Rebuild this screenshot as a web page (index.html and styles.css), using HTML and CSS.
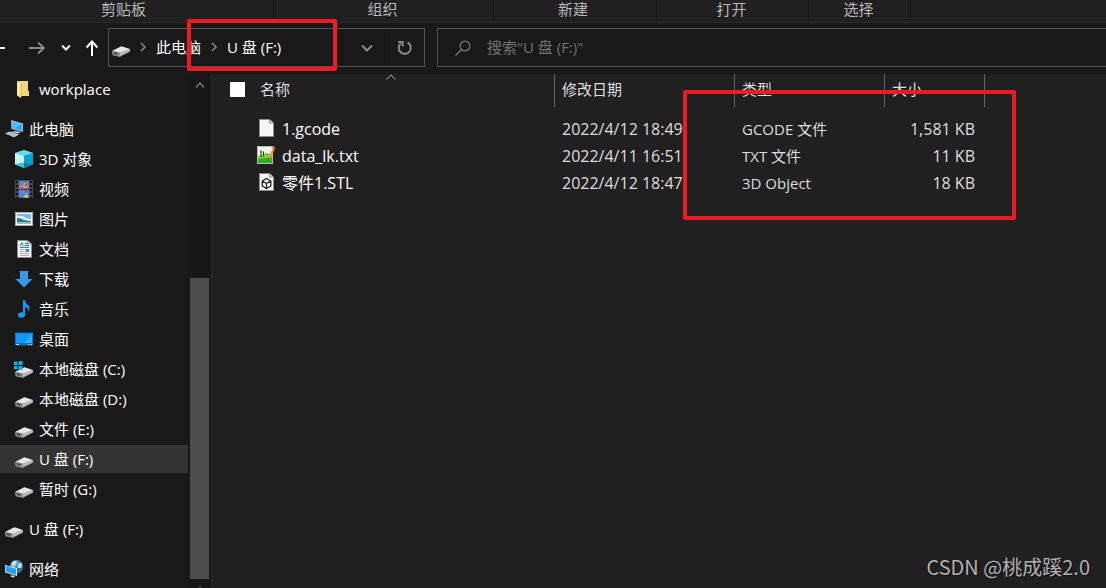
FILE: index.html
```
<!DOCTYPE html>
<html lang="zh-CN">
<head>
    <meta charset="UTF-8">
    <meta name="viewport" content="width=device-width, initial-scale=1.0">
    <title>U 盘 (F:)</title>
    <link rel="stylesheet" href="styles.css">
</head>
<body>

    <!-- shared icons -->
    <svg class="sprite">
        <symbol id="drive" viewBox="0 -1 18 18" overflow="visible">
            <path d="M0 11 L9 6.500 L18 9 L18 11.500 L8 17 L1 15.500 L0 14Z" fill="#77777a"/>
            <path d="M0.500 10.800 L9.500 6.300 L17.800 9 L8 12.800Z" fill="#e6e6e8"/>
            <path d="M8 12.800 L17.800 9 L17.800 11.500 L8 16Z" fill="#bdbdc1"/>
            <path d="M0.500 11 L8 12.800 L8 16.400 L1.500 15Z" fill="#9a9a9d"/>
            <path d="M1.500 12 L7 13.300 L7 15.200 L2 14.200Z" fill="#454547"/>
            <rect x="5" y="13.500" width="2" height="1.500" fill="#42b94a"/>
        </symbol>
        <symbol id="page" viewBox="0 0 18 18">
            <path d="M2.500 0.500 H12.500 L16.500 4 V17.500 H2.500Z" fill="#f5f6f6" stroke="#8d8d8d"/>
            <path d="M12.500 0.500 V4 H16.500" fill="#d5d5d5" stroke="#8d8d8d"/>
        </symbol>
    </svg>

    <div class="ribbon">
        <span class="group clipboard">剪贴板</span>
        <span class="group organize">组织</span>
        <span class="group new">新建</span>
        <span class="group open">打开</span>
        <span class="group select">选择</span>
    </div>

    <div class="toolbar">
        <button class="tool back" aria-label="后退"><svg width="20" height="16" viewBox="0 0 20 16"><path d="M0 8 H5" stroke="#fff" stroke-width="2"/></svg></button>
        <button class="tool forward" aria-label="前进"><svg width="16" height="14" viewBox="0 0 16 14"><path d="M0 7 H15 M9 1.500 L15 7 L9 12.500" fill="none" stroke="#8c8c8c" stroke-width="1.800"/></svg></button>
        <button class="tool recent" aria-label="最近浏览的位置"><svg width="10" height="8" viewBox="0 0 10 8"><path d="M1 1.500 L5 5.500 L9 1.500" fill="none" stroke="#f5f5f5" stroke-width="2"/></svg></button>
        <button class="tool up" aria-label="上移"><svg width="14" height="16" viewBox="0 0 14 16"><path d="M7 16 V2 M1.500 7.500 L7 1.500 L12.500 7.500" fill="none" stroke="#fff" stroke-width="2"/></svg></button>

        <div class="address">
            <svg class="address-icon" width="18" height="18"><use href="#drive"/></svg>
            <svg class="crumb-arrow" width="6" height="10" viewBox="0 0 6 10"><path d="M1 1 L5 5 L1 9" fill="none" stroke="#8a8a8a" stroke-width="1.500"/></svg>
            <button class="crumb">此电脑</button>
            <svg class="crumb-arrow" width="6" height="10" viewBox="0 0 6 10"><path d="M1 1 L5 5 L1 9" fill="none" stroke="#8a8a8a" stroke-width="1.500"/></svg>
            <button class="crumb">U 盘 (F:)</button>
            <button class="tool history" aria-label="以前的位置"><svg width="12" height="8" viewBox="0 0 12 8"><path d="M1 1.500 L6 6.500 L11 1.500" fill="none" stroke="#8a8a8a" stroke-width="2"/></svg></button>
            <button class="tool refresh" aria-label="刷新"><svg width="16" height="16" viewBox="0 0 16 16"><path d="M10.500 2.500 A6 6 0 1 1 4 3.200" fill="none" stroke="#8a8a8a" stroke-width="2"/><path d="M1 1.800 H5.800 V6.500" fill="none" stroke="#8a8a8a" stroke-width="1.800"/></svg></button>
        </div>

        <div class="search">
            <svg width="16" height="16" viewBox="0 0 16 16"><circle cx="10" cy="6" r="4.900" fill="none" stroke="#7a7a7a" stroke-width="1.200"/><path d="M6.500 9.500 L0.500 15.500" stroke="#7a7a7a" stroke-width="1.300"/></svg>
            <input type="text" aria-label="搜索" placeholder='搜索"U 盘 (F:)"'>
        </div>
    </div>

    <div class="content">
        <nav class="sidebar">
            <a class="item child" href="#"><svg viewBox="0 0 18 18"><path d="M3 1 H13 V11 H14 V16 H6 L3 15Z" fill="#f8d675"/><path d="M2 1 L6 3.500 V18 L2 15.500Z" fill="#ffe9a4"/><path d="M6 4 V17" stroke="#d9b04e"/></svg>workplace</a>
            <a class="item root" href="#"><svg viewBox="0 0 18 18"><path d="M6 0 L18 3.500 V12 L6.500 9Z" fill="#b7c5d0"/><path d="M7 1.200 L17.200 4.200 V11 L7.200 8.300Z" fill="#2aa5f6"/><path d="M7 1.200 L17.200 4.200 L9 8.700 L7.200 8.300Z" fill="#55bcfc"/><path d="M9 11 L16 12 L13.500 13.500 L7 12Z" fill="#cfd8dd"/><path d="M0 13.500 L5 11.500 L14 14.500 L9 17.300Z" fill="#d4dce1"/><path d="M2 13.600 L9 15.800 M4 12.800 L11 15" stroke="#7e8b94" stroke-width=".6"/></svg>此电脑</a>
            <a class="item child" href="#"><svg viewBox="0 0 18 18"><path d="M9 0 L18 3 V14.500 L9 18 L0 14.500 V3Z" fill="#16b6d5"/><path d="M0 3 L9 0 L18 3 L9 6Z" fill="#6bdcea"/><path d="M0 3 L9 6 V12.500 L0 14.500Z" fill="#c6f3f5"/><path d="M9 6 L18 3 V14.500 L9 12.500Z" fill="#08a2d1"/><path d="M0 14.500 L9 12.500 V18Z" fill="#37c4d5"/><path d="M9 12.500 L18 14.500 L9 18Z" fill="#087e9e"/></svg>3D 对象</a>
            <a class="item child" href="#"><svg viewBox="0 0 18 18"><path d="M0 0 H18 V18 H0Z" fill="#484848"/><path d="M2 1 V18 M16 1 V18" stroke="#111" stroke-width="2" stroke-dasharray="2 2"/><path d="M4 1 H14 V8.500 H4Z M4 10 H14 V17.500 H4Z" fill="#4f87e5"/><path d="M4 6 L8 5 L9 8.500 H4Z" fill="#f05b81"/><path d="M9 3 L13 4 L12 8.500 L8 7Z" fill="#e9c62f"/><circle cx="11" cy="5" r="1.500" fill="#d73731"/><path d="M9 10 H13 L11 12Z" fill="#bd3429"/><path d="M8 17.500 L11 14 L14 17.500Z" fill="#f0cc3b"/></svg>视频</a>
            <a class="item child" href="#"><svg viewBox="0 0 18 18"><rect x=".5" y="2.500" width="17" height="13" fill="#fff" stroke="#aaa"/><path d="M2 4 H16 V14 H2Z" fill="#7cb9ef"/><path d="M2 6 Q8 5 11 8 L16 9 V11 H2Z" fill="#d8f0fa"/><path d="M2 8 Q6 8 9 10 L16 11.500 V12.500 H2Z" fill="#36776f"/><path d="M2 12 L16 12 V14 H2Z" fill="#8fc3d6"/></svg>图片</a>
            <a class="item child" href="#"><svg viewBox="0 0 18 18"><use href="#page"/><path d="M10 3.500 H12 M9.500 5.500 H14 M5 7.500 H14" stroke="#1683c8"/><path d="M5 6 L7 2.500 L8 6" fill="none" stroke="#1683c8"/><path d="M5 9.500 H9.500 M5 11.500 H9.500 M5 13.500 H14 M5 15.500 H14" stroke="#aaa"/><rect x="10.500" y="9" width="3.500" height="3" fill="#4f8cae"/></svg>文档</a>
            <a class="item child" href="#"><svg viewBox="0 0 18 18"><path d="M5 1 H13 V9 H17.500 L9 17.500 L0.500 9 H5Z" fill="#3997e8"/></svg>下载</a>
            <a class="item child" href="#"><svg viewBox="0 0 18 18"><ellipse cx="6.500" cy="15" rx="3.500" ry="2.800" fill="#0c9bf5"/><path d="M8 0 H10 Q10 3 12.500 4.500 Q16 7 13 12 Q14 8 10 7 V15 H8Z" fill="#0c9bf5"/></svg>音乐</a>
            <a class="item child" href="#"><svg viewBox="0 0 18 18"><path d="M0 2.500 H18 V15.500 H0Z" fill="#0874c7"/><path d="M1 3.500 H17 V13 H1Z" fill="#1499fa"/><path d="M9 13 L17 5 V13Z" fill="#35acff"/><path d="M1.500 14.500 H4 M13 14.500 H14.500 M16 14.500 H17" stroke="#fff"/></svg>桌面</a>
            <a class="item child" href="#"><svg viewBox="0 0 18 18"><use href="#drive"/><path d="M-1 2 L2.500 1.500 V5 H-1Z M3.500 1.300 L7.500 1 V5 H3.500Z M-1 6 H2.500 V9.500 L-1 9Z M3.500 6 H7.500 V10 L3.500 9.600Z" fill="#09b7ed"/></svg>本地磁盘 (C:)</a>
            <a class="item child" href="#"><svg viewBox="0 0 18 18"><use href="#drive"/></svg>本地磁盘 (D:)</a>
            <a class="item child" href="#"><svg viewBox="0 0 18 18"><use href="#drive"/></svg>文件 (E:)</a>
            <a class="item child active" href="#"><svg viewBox="0 0 18 18"><use href="#drive"/></svg>U 盘 (F:)</a>
            <a class="item child" href="#"><svg viewBox="0 0 18 18"><use href="#drive"/></svg>暂时 (G:)</a>
            <a class="item root" href="#"><svg viewBox="0 0 18 18"><use href="#drive"/></svg>U 盘 (F:)</a>
            <a class="item root" href="#"><svg viewBox="0 0 18 18"><circle cx="11.500" cy="6.500" r="6.500" fill="#4e94b7"/><path d="M7 2 Q11 -1 12 3 L9 7 L6 5Z M13 4 L17 3 L16 8 L13 8Z" fill="#b9e2ee"/><path d="M9 11 Q15 13 17 8 L14 8Z" fill="#28688c"/><path d="M0 5 L12 8 V16 L0 12.500Z" fill="#bde6ff"/><path d="M0.700 6 L11 8.800 V14.800 L0.700 11.800Z" fill="#24a1f5"/><path d="M5 15.500 L9 15.500 L10 17.500 L6 17Z" fill="#d0dce1"/></svg>网络</a>
        </nav>

        <div class="scrollbar">
            <svg width="10" height="8" viewBox="0 0 10 8"><path d="M1 6.500 L5 2 L9 6.500" fill="none" stroke="#727272" stroke-width="1.600"/></svg>
            <div class="thumb"></div>
            <svg width="10" height="8" viewBox="0 0 10 8"><path d="M1 1.500 L5 6 L9 1.500" fill="none" stroke="#727272" stroke-width="1.600"/></svg>
        </div>

        <main class="files">
            <table>
                <colgroup>
                    <col class="col-name">
                    <col class="col-date">
                    <col class="col-type">
                    <col class="col-size">
                    <col>
                </colgroup>
                <thead>
                    <tr>
                        <th>
                            <div class="name-head">
                                <input type="checkbox" aria-label="全选">名称
                                <svg class="sort" width="10" height="6" viewBox="0 0 10 6"><path d="M.5 5.500 L5 1 L9.500 5.500" fill="none" stroke="#aaa"/></svg>
                            </div>
                        </th>
                        <th>修改日期</th>
                        <th>类型</th>
                        <th>大小</th>
                        <th></th>
                    </tr>
                </thead>
                <tbody>
                    <tr>
                        <td><div class="file"><svg viewBox="0 0 18 18"><use href="#page"/></svg>1.gcode</div></td>
                        <td>2022/4/12 18:49</td>
                        <td class="type">GCODE 文件</td>
                        <td class="size">1,581 KB</td>
                        <td></td>
                    </tr>
                    <tr>
                        <td><div class="file"><svg viewBox="0 0 18 18"><path d="M0 0 H16 V18 H0Z" fill="#b9b9b9"/><path d="M1 1 H15 V17 H1Z" fill="#f1f6e7"/><path d="M1 10 L15 7 V17 H1Z" fill="#7fd43c"/><path d="M1 13 L15 11 V17 H1Z" fill="#29b51c"/><path d="M4 4.500 V11 M6.500 5.500 V10.500" stroke="#273a21" stroke-width="1.200"/><path d="M8 8 H9 M10 8 H11" stroke="#273a21" stroke-width="1.200"/><path d="M17 2 L12 13" stroke="#ee9e23" stroke-width="2"/><path d="M12 12 L11 15" stroke="#5d4a35"/><path d="M16 1 L18 2" stroke="#d85b51" stroke-width="2"/></svg>data_lk.txt</div></td>
                        <td>2022/4/11 16:51</td>
                        <td class="type">TXT 文件</td>
                        <td class="size">11 KB</td>
                        <td></td>
                    </tr>
                    <tr>
                        <td><div class="file"><svg viewBox="0 0 18 18"><use href="#page"/><path d="M9.500 5.500 L13.800 8 V13 L9.500 15.500 L5.200 13 V8Z M5.200 8 L9.500 10.500 L13.800 8 M9.500 10.500 V15.500" fill="none" stroke="#222" stroke-width="1.300"/></svg>零件1.STL</div></td>
                        <td>2022/4/12 18:47</td>
                        <td class="type">3D Object</td>
                        <td class="size">18 KB</td>
                        <td></td>
                    </tr>
                </tbody>
            </table>
        </main>
    </div>

    <div class="mark mark-path"></div>
    <div class="mark mark-types"></div>
    <div class="watermark">CSDN @桃成蹊2.0</div>

</body>
</html>
```

FILE: styles.css
```
* {
    box-sizing: border-box;
}

body {
    margin: 0;
    height: 100vh;
    display: flex;
    flex-direction: column;
    position: relative;
    overflow: hidden;
    background: #191919;
    color: #fff;
    font-family: "Open Sans", "Noto Sans CJK SC", sans-serif;
    font-size: 15px;
}

button,
input {
    font: inherit;
    color: inherit;
    border: none;
    background: none;
    padding: 0;
    margin: 0;
}

svg {
    display: block;
    flex: none;
    overflow: visible;
}

.sprite {
    position: absolute;
    width: 0;
    height: 0;
}

/* ribbon group names */
.ribbon {
    display: flex;
    flex: none;
    height: 23px;
    padding-bottom: 4px;
    background: #202020;
    border-bottom: 1px solid #2b2b2b;
    color: #b8b8b8;
}

.group {
    border-right: 1px solid #161616;
    text-align: center;
    line-height: 18px;
}

.clipboard {
    width: 274px;
    padding-right: 26px;
}

.organize {
    width: 220px;
    padding-right: 2px;
}

.new {
    width: 163px;
    padding-right: 4px;
}

.open {
    width: 152px;
    padding-right: 2px;
}

.select {
    width: 102px;
    padding-right: 2px;
}

/* navigation, address and search */
.toolbar {
    display: flex;
    align-items: center;
    flex: none;
    height: 51px;
    padding-bottom: 2px;
}

.tool {
    display: flex;
    align-items: center;
    justify-content: center;
    flex: none;
    height: 36px;
}

.back {
    width: 20px;
}

.forward {
    width: 34px;
}

.recent {
    width: 24px;
}

.up {
    width: 28px;
    margin-right: 2px;
}

.address {
    display: flex;
    align-items: center;
    width: 317px;
    height: 39px;
    padding-left: 3px;
    border: 1px solid #535353;
}

.crumb-arrow {
    margin: 0 10px 2px;
}

.crumb {
    padding-bottom: 2px;
    line-height: 34px;
}

.history {
    width: 36px;
    margin-left: auto;
    border-right: 1px solid #151515;
}

.refresh {
    width: 39px;
}

.search {
    display: flex;
    align-items: center;
    flex: 1;
    gap: 16px;
    height: 39px;
    margin-left: 12px;
    padding-left: 17px;
    border: 1px solid #535353;
    border-right: none;
}

.search input {
    flex: 1;
    min-width: 0;
    height: 36px;
    padding-bottom: 2px;
    outline: none;
}

.search input::placeholder {
    color: #737373;
    opacity: 1;
}

.content {
    display: flex;
    flex: 1;
    min-height: 0;
}

/* folder tree */
.sidebar {
    display: flex;
    flex-direction: column;
    flex: none;
    gap: 2px;
    width: 188px;
    padding-top: 1px;
    overflow: hidden;
}

.item {
    display: flex;
    align-items: center;
    flex: none;
    gap: 6px;
    height: 28px;
    line-height: 28px;
    color: #fff;
    text-decoration: none;
    white-space: nowrap;
}

.item svg,
.file svg {
    width: 18px;
    height: 18px;
}

.child {
    padding-left: 15px;
}

.root {
    margin-top: 10px;
    padding-left: 5px;
}

.active {
    background: #333;
}

.scrollbar {
    display: flex;
    flex-direction: column;
    align-items: center;
    flex: none;
    width: 24px;
    padding: 7px 1px 0;
    background: #171717;
    border-right: 1px solid #2b2b2b;
}

.thumb {
    flex: 1;
    width: 19px;
    margin: 189px 0 6px;
    background: #4d4d4d;
}

.scrollbar svg:last-child {
    height: 3px;
}

/* file list */
.files {
    flex: 1;
    min-width: 0;
    background: #202020;
}

table {
    width: 100%;
    table-layout: fixed;
    border-collapse: separate;
    border-spacing: 0;
}

.col-name {
    width: 342px;
}

.col-date {
    width: 180px;
}

.col-type {
    width: 150px;
}

.col-size {
    width: 100px;
}

th {
    height: 33px;
    padding: 0 0 2px 7px;
    border-left: 1px solid #636363;
    color: #dedede;
    font-weight: normal;
    line-height: 31px;
    text-align: left;
}

th:first-child {
    padding-left: 18px;
    border-left: none;
}

.name-head {
    display: flex;
    align-items: center;
    position: relative;
    gap: 15px;
}

.name-head input {
    appearance: none;
    width: 15px;
    height: 15px;
    background: #fff;
}

.sort {
    position: absolute;
    left: 156px;
    top: 0;
}

tbody::before {
    content: "";
    display: block;
    height: 9px;
}

td {
    height: 27px;
    padding: 0 0 0 8px;
    color: #dedede;
    font-size: 16px;
    line-height: 27px;
    white-space: nowrap;
}

td:first-child {
    padding-left: 45px;
}

.file {
    display: flex;
    align-items: center;
    gap: 7px;
    color: #fff;
}

.file svg {
    margin-bottom: 3px;
}

.type {
    font-size: 15px;
}

.size {
    padding-right: 9px;
    text-align: right;
}

/* red frames drawn over the window */
.mark {
    position: absolute;
    border: 4px solid #ed1c24;
    border-radius: 2px;
    pointer-events: none;
}

.mark-path {
    left: 187px;
    top: 19px;
    width: 150px;
    height: 52px;
}

.mark-types {
    left: 683px;
    top: 90px;
    width: 333px;
    height: 130px;
}

.watermark {
    position: absolute;
    right: 16px;
    bottom: 6px;
    color: #b0b0b0;
    font-family: "Noto Sans CJK SC", sans-serif;
    font-size: 20px;
    line-height: 30px;
    text-shadow: 1px 1px 1px #111;
}
```
